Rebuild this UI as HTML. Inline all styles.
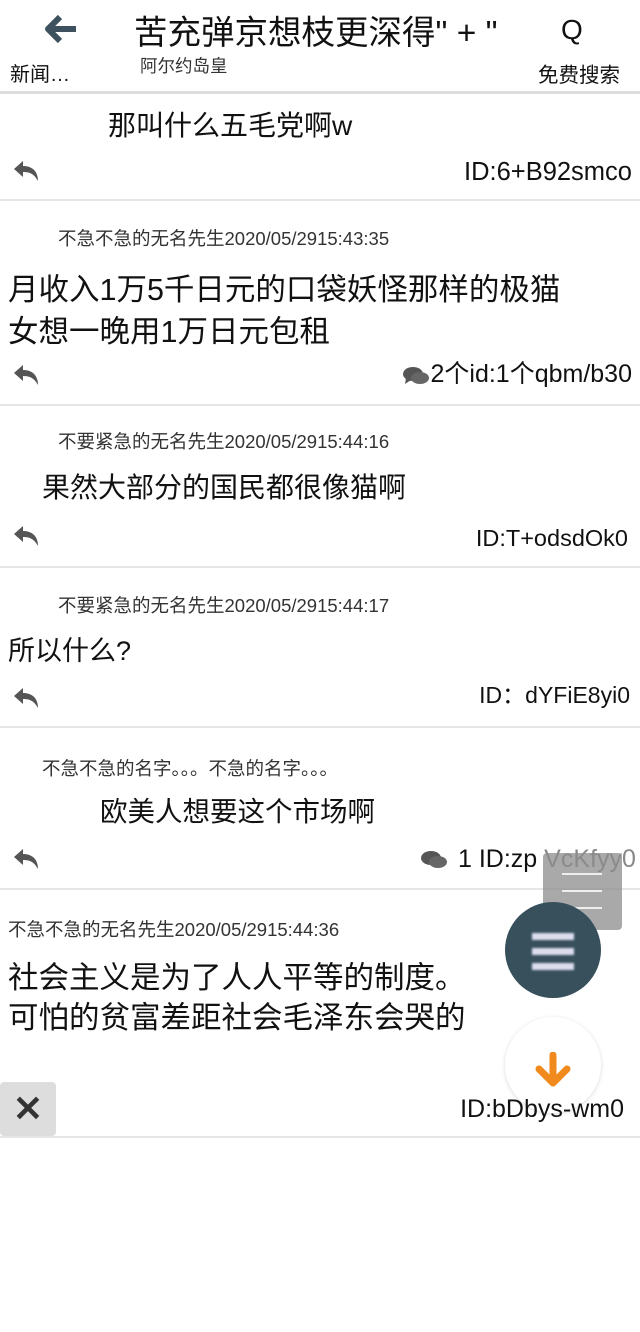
<!DOCTYPE html><html><head><meta charset="utf-8"><style>
body{margin:0;width:640px;height:1332px;background:#fff;position:relative;overflow:hidden;font-family:"Liberation Sans","Noto Sans CJK SC",sans-serif;color:#111}
.a{position:absolute;white-space:nowrap;line-height:1}
.hr{position:absolute;left:0;width:640px;height:2px;background:#e6e6e6}
.h{font-size:18.5px;color:#333}
.r{position:absolute;left:12px}
</style></head><body>
<svg class="a" style="left:44px;top:14px" width="34" height="30" viewBox="0 0 34 30"><path d="M16 3 L4 15 L16 27 M4 15 H32" stroke="#3d525e" stroke-width="6" fill="none" stroke-linejoin="round"/></svg>
<div class="a" style="left:134px;top:17px;font-size:33.5px">苦充弹京想枝更深得" + "</div>
<div class="a" style="left:561px;top:16px;font-size:28px">Q</div>
<div class="a" style="left:10px;top:65px;font-size:20px">新闻…</div>
<div class="a" style="left:140px;top:58px;font-size:17.5px;color:#333">阿尔约岛皇</div>
<div class="a" style="left:538px;top:66px;font-size:20.5px">免费搜索</div>
<div class="hr" style="top:91px;background:#ddd;height:3px"></div>
<svg width="0" height="0"><defs><symbol id="rp" viewBox="0 0 28 24"><path d="M2 10 L11 2 V7 C20 7 26 12 26 22 C22 15 18 13 11 13 V18 Z" fill="#555"/></symbol></defs></svg>

<div class="a" style="left:108px;top:112px;font-size:28px">那叫什么五毛党啊w</div>
<svg class="r" style="top:159px" width="28" height="24"><use href="#rp"/></svg>
<div class="a" style="right:8px;top:160px;font-size:25.5px">ID:6+B92smco</div>
<div class="hr" style="top:199px"></div>

<div class="a h" style="left:58px;top:230px">不急不急的无名先生2020/05/2915:43:35</div>
<div class="a" style="left:8px;top:269px;font-size:30.5px;line-height:42px">月收入1万5千日元的口袋妖怪那样的极猫<br>女想一晚用1万日元包租</div>
<svg class="r" style="top:363px" width="28" height="24"><use href="#rp"/></svg>
<svg class="a" style="left:403px;top:366px" width="26" height="20" viewBox="0 0 26 20"><ellipse cx="10" cy="8" rx="10" ry="7" fill="#555"/><path d="M3 12 L2 18 L8 14Z" fill="#555"/><ellipse cx="17" cy="12" rx="9" ry="6" fill="#666"/></svg>
<div class="a" style="right:8px;top:362px;font-size:25px">2个id:1个qbm/b30</div>
<div class="hr" style="top:404px"></div>

<div class="a h" style="left:58px;top:433px">不要紧急的无名先生2020/05/2915:44:16</div>
<div class="a" style="left:42px;top:474px;font-size:28px">果然大部分的国民都很像猫啊</div>
<svg class="r" style="top:524px" width="28" height="24"><use href="#rp"/></svg>
<div class="a" style="right:12px;top:527px;font-size:23.5px">ID:T+odsdOk0</div>
<div class="hr" style="top:566px"></div>

<div class="a h" style="left:58px;top:597px">不要紧急的无名先生2020/05/2915:44:17</div>
<div class="a" style="left:8px;top:638px;font-size:27px">所以什么?</div>
<svg class="r" style="top:686px" width="28" height="24"><use href="#rp"/></svg>
<div class="a" style="right:10px;top:684px;font-size:23px">ID：dYFiE8yi0</div>
<div class="hr" style="top:726px"></div>

<div class="a h" style="left:42px;top:760px">不急不急的名字。。。不急的名字。。。</div>
<div class="a" style="left:100px;top:798px;font-size:27.5px">欧美人想要这个市场啊</div>
<svg class="r" style="top:847px" width="28" height="24"><use href="#rp"/></svg>
<svg class="a" style="left:421px;top:850px" width="26" height="20" viewBox="0 0 26 20"><ellipse cx="10" cy="8" rx="10" ry="7" fill="#555"/><ellipse cx="17" cy="12" rx="9" ry="6" fill="#666"/></svg>
<div class="a" style="left:458px;top:847px;font-size:25px">1 ID:zp <span style="color:#888">VcKfyy0</span></div>
<div class="hr" style="top:888px"></div>

<div class="a h" style="left:8px;top:921px">不急不急的无名先生2020/05/2915:44:36</div>
<div class="a" style="left:8px;top:958px;font-size:30.5px;line-height:40px">社会主义是为了人人平等的制度。<br>可怕的贫富差距社会毛泽东会哭的</div>
<div class="a" style="left:0;top:1082px;width:56px;height:54px;background:#ddd;border-radius:4px;font-size:36px;font-weight:bold;text-align:center;line-height:54px;color:#333">✕</div>
<div class="hr" style="top:1136px"></div>

<div class="a" style="left:543px;top:853px;width:79px;height:77px;background:rgba(140,140,140,.75);border-radius:4px"></div>
<div class="a" style="left:562px;top:873px;width:40px;height:2px;background:#eee"></div>
<div class="a" style="left:562px;top:890px;width:40px;height:2px;background:#eee"></div>
<div class="a" style="left:562px;top:907px;width:40px;height:2px;background:#eee"></div>
<div class="a" style="left:505px;top:902px;width:96px;height:96px;border-radius:50%;background:#37505c"></div>
<div class="a" style="left:532px;top:933px;width:42px;height:7px;background:#dde;filter:blur(1px)"></div>
<div class="a" style="left:532px;top:948px;width:42px;height:7px;background:#dde;filter:blur(1px)"></div>
<div class="a" style="left:532px;top:963px;width:42px;height:7px;background:#dde;filter:blur(1px)"></div>
<div class="a" style="left:505px;top:1017px;width:96px;height:96px;border-radius:50%;background:#fff;box-shadow:0 1px 4px rgba(0,0,0,.15)"></div>
<svg class="a" style="left:533px;top:1052px" width="40" height="36" viewBox="0 0 40 36"><path d="M20 3 V30 M6 17 L20 31 L34 17" stroke="#f08a1c" stroke-width="7" fill="none" stroke-linecap="round" stroke-linejoin="round"/></svg>
<div class="a" style="right:16px;top:1097px;font-size:25px">ID:bDbys-wm0</div>
</body></html>
